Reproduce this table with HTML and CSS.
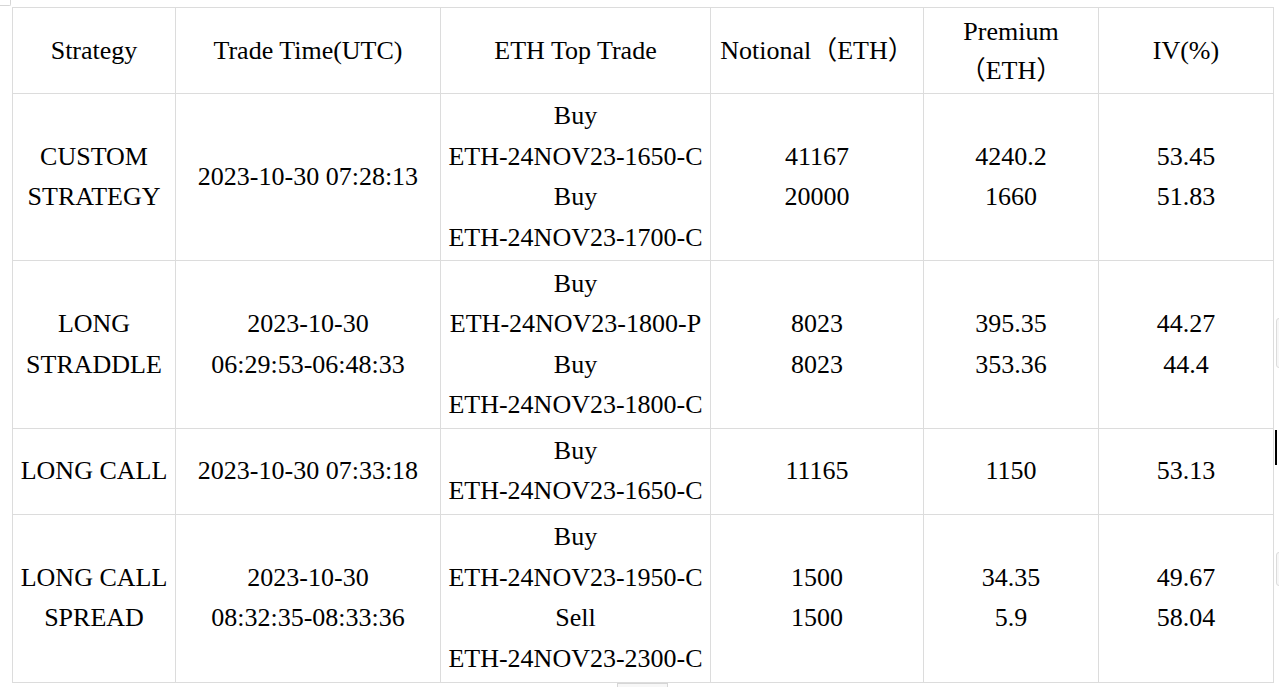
FILE: index.html
```html
<!DOCTYPE html>
<html lang="en">
<head>
<meta charset="utf-8">
<title>ETH Top Trades</title>
<link rel="stylesheet" href="styles.css">
</head>
<body>
<div class="corner-mark"></div>
<table class="trades">
  <colgroup>
    <col class="c1"><col class="c2"><col class="c3"><col class="c4"><col class="c5"><col class="c6">
  </colgroup>
  <thead>
    <tr>
      <th>Strategy</th>
      <th>Trade Time(UTC)</th>
      <th>ETH Top Trade</th>
      <th>Notional（ETH）</th>
      <th>Premium<br>（ETH）</th>
      <th>IV(%)</th>
    </tr>
  </thead>
  <tbody>
    <tr>
      <td>CUSTOM<br>STRATEGY</td>
      <td>2023-10-30 07:28:13</td>
      <td>Buy<br>ETH-24NOV23-1650-C<br>Buy<br>ETH-24NOV23-1700-C</td>
      <td>41167<br>20000</td>
      <td>4240.2<br>1660</td>
      <td>53.45<br>51.83</td>
    </tr>
    <tr>
      <td>LONG<br>STRADDLE</td>
      <td>2023-10-30<br>06:29:53-06:48:33</td>
      <td>Buy<br>ETH-24NOV23-1800-P<br>Buy<br>ETH-24NOV23-1800-C</td>
      <td>8023<br>8023</td>
      <td>395.35<br>353.36</td>
      <td>44.27<br>44.4</td>
    </tr>
    <tr>
      <td>LONG CALL</td>
      <td>2023-10-30 07:33:18</td>
      <td>Buy<br>ETH-24NOV23-1650-C</td>
      <td>11165</td>
      <td>1150</td>
      <td>53.13</td>
    </tr>
    <tr>
      <td>LONG CALL<br>SPREAD</td>
      <td>2023-10-30<br>08:32:35-08:33:36</td>
      <td>Buy<br>ETH-24NOV23-1950-C<br>Sell<br>ETH-24NOV23-2300-C</td>
      <td>1500<br>1500</td>
      <td>34.35<br>5.9</td>
      <td>49.67<br>58.04</td>
    </tr>
  </tbody>
</table>
<div class="edge-box edge-a"></div>
<div class="edge-caret"></div>
<div class="edge-box edge-b"></div>
<div class="bottom-tab"></div>
</body>
</html>
```

FILE: styles.css
```css
html, body {
  margin: 0;
  padding: 0;
  background: #ffffff;
}

body {
  position: relative;
  width: 1279px;
  height: 687px;
  overflow: hidden;
  padding: 7px 0 0 12px;
  box-sizing: border-box;
  font-family: "Liberation Serif", "Times New Roman", Tinos, "Noto Sans CJK SC", serif;
  color: #000000;
}

.trades {
  border-collapse: collapse;
  table-layout: fixed;
  width: 1261px;
  font-size: 26px;
  line-height: 40.5px;
}

.c1 { width: 163px; }
.c2 { width: 265px; }
.c3 { width: 270px; }
.c4 { width: 213px; }
.c5 { width: 175px; }
.c6 { width: 175px; }

.trades th,
.trades td {
  border: 1px solid #dcdcdc;
  padding: 2.2px 2px;
  text-align: center;
  vertical-align: middle;
  font-weight: normal;
  white-space: nowrap;
}

.trades th {
  line-height: 39px;
  padding-top: 3.5px;
  padding-bottom: 3.5px;
}

.corner-mark {
  position: absolute;
  left: 0;
  top: 0;
  width: 10px;
  height: 5px;
  border-right: 1px solid #d6d6d6;
  border-bottom: 1px solid #d6d6d6;
  border-bottom-right-radius: 2px;
}

.edge-box {
  position: absolute;
  left: 1276px;
  width: 10px;
  border: 1px solid #dcdcdc;
  border-radius: 3px;
  background: #f7f7f7;
}

.edge-a { top: 318px; height: 48px; }
.edge-b { top: 552px; height: 32px; }

.edge-caret {
  position: absolute;
  left: 1275px;
  top: 430px;
  width: 2px;
  height: 35px;
  background: #000000;
}

.bottom-tab {
  position: absolute;
  left: 617px;
  top: 683px;
  width: 49px;
  height: 10px;
  border: 1px solid #d6d6d6;
  background: #f7f7f7;
}
```
